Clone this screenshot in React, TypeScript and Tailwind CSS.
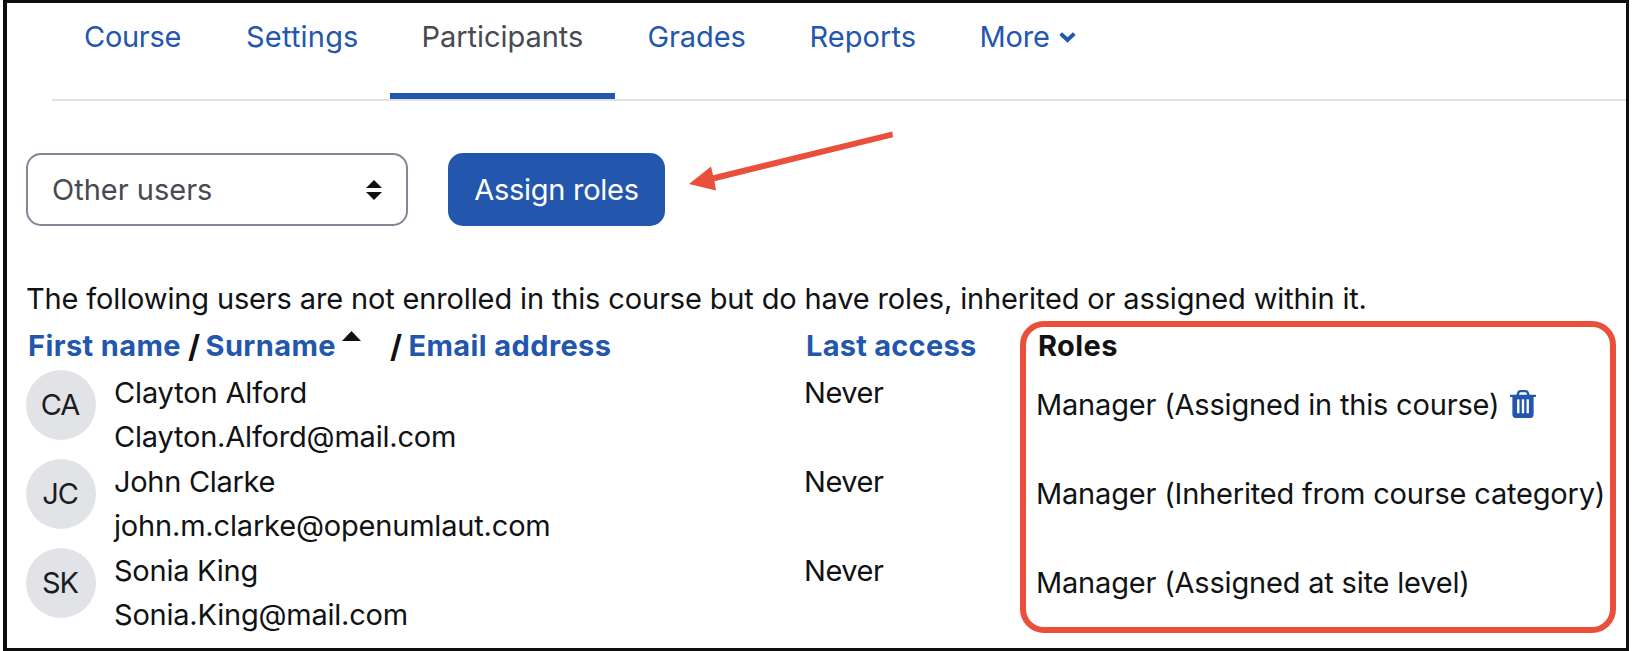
const users = [
  { initials: 'CA', name: 'Clayton Alford', nameClass: 'tracking-[-0.15px]', email: 'Clayton.Alford@mail.com', emailClass: 'tracking-[-0.2px]', role: 'Manager (Assigned in this course)', removable: true },
  { initials: 'JC', name: 'John Clarke', nameClass: 'tracking-[-0.3px]', email: 'john.m.clarke@openumlaut.com', emailClass: 'tracking-[-0.18px]', role: 'Manager (Inherited from course category)', removable: false },
  { initials: 'SK', name: 'Sonia King', nameClass: 'tracking-[-0.25px]', email: 'Sonia.King@mail.com', emailClass: 'tracking-[-0.22px]', role: 'Manager (Assigned at site level)', removable: false },
];

function ChevronDown() {
  return (
    <svg className="ml-[9px] mt-px h-[11px] w-[17px]" viewBox="0 0 17 11" fill="none" stroke="currentColor" strokeWidth="4">
      <path d="M1.700 1.600 L8.500 8 L15.300 1.600" />
    </svg>
  );
}

function TrashIcon() {
  return (
    <svg className="ml-[11px] -mt-[2px] h-[28px] w-[26px] text-[#2357ad]" viewBox="192 128 1408 1536" preserveAspectRatio="none" fill="currentColor">
      <path d="M704 1376v-704q0-14-9-23t-23-9h-64q-14 0-23 9t-9 23v704q0 14 9 23t23 9h64q14 0 23-9t9-23zm256 0v-704q0-14-9-23t-23-9h-64q-14 0-23 9t-9 23v704q0 14 9 23t23 9h64q14 0 23-9t9-23zm256 0v-704q0-14-9-23t-23-9h-64q-14 0-23 9t-9 23v704q0 14 9 23t23 9h64q14 0 23-9t9-23zm-544-992h448l-48-117q-7-9-17-11h-317q-10 2-17 11zm928 32v64q0 14-9 23t-23 9h-96v948q0 83-47 143.500t-113 60.500h-832q-66 0-113-58.500t-47-141.500v-952h-96q-14 0-23-9t-9-23v-64q0-14 9-23t23-9h309l70-167q15-37 54-63t79-26h320q40 0 79 26t54 63l70 167h309q14 0 23 9t9 23z" />
    </svg>
  );
}

function Slash({ className }: { className: string }) {
  return <span className={`inline-block text-[31px] leading-none text-[#0f1114] ${className}`}>/</span>;
}

export default function App() {
  return (
    <div className="h-[651px] w-[1633px] bg-white pl-[3px] pr-1 font-['Inter','Liberation_Sans',sans-serif] text-[29px] text-[#101214]">
      <div className="relative flex h-[651px] flex-col border-[3px] border-l-4 border-[#0d0e10] bg-white">
        <nav className="ml-[45px] flex h-[98px] shrink-0 border-b-2 border-[#dfe2e7] leading-[67px] text-[#2357ad]">
          <a className="w-[162px] pl-8 tracking-[-0.3px]">Course</a>
          <a className="w-[176px] pl-8 tracking-[0.2px]">Settings</a>
          <a className="mr-[1.5px] h-[96px] w-[225px] border-b-[6px] border-[#2357ad] pl-[31.5px] tracking-[-0.05px] text-[#474a50]">Participants</a>
          <a className="w-[162px] pl-[31px] tracking-[-0.1px]">Grades</a>
          <a className="w-[170px] pl-[31px] tracking-[0.05px]">Reports</a>
          <a className="flex h-[67px] items-center pl-[31px] tracking-[-0.15px]">
            More
            <ChevronDown />
          </a>
        </nav>

        <div className="ml-[19px] mt-[52px] flex h-[73px] shrink-0">
          <button className="flex w-[382px] items-center justify-between rounded-[15px] border-2 border-[#7f8694] pl-6 pr-6 text-[#474a50]">
            <span>Other users</span>
            <svg className="h-5 w-4" viewBox="0 0 16 20" fill="#0f1114">
              <path d="M0 8 L8 0 L16 8 Z M0 12 L16 12 L8 20 Z" />
            </svg>
          </button>
          <button className="ml-10 w-[217px] rounded-[15px] bg-[#2357ad] text-center tracking-[-0.27px] text-white">Assign roles</button>
        </div>

        <p className="ml-[19px] mt-[52px] h-[46px] shrink-0 whitespace-nowrap leading-[42px] tracking-[-0.145px]">
          The following users are not enrolled in this course but do have roles, inherited or assigned within it.
        </p>

        <div className="-mt-px ml-[21px] flex h-[46px] shrink-0 items-center font-bold tracking-[0.4px]">
          <div className="flex w-[778px] items-center whitespace-nowrap text-[#2357ad]">
            <span>First name</span>
            <Slash className="ml-[7px]" />
            <span className="ml-[5px]">Surname</span>
            <svg className="-mt-5 ml-[6px] h-[10px] w-[19px]" viewBox="0 0 19 10" fill="#0f1114">
              <path d="M0 10 L9.500 0 L19 10 Z" />
            </svg>
            <Slash className="ml-[29px]" />
            <span className="ml-[6px]">Email address</span>
          </div>
          <div className="w-[232px] tracking-[0.25px] text-[#2357ad]">Last access</div>
          <div>Roles</div>
        </div>

        <div className="ml-[19px] mt-px">
          {users.map((user) => (
            <div key={user.initials} className="flex h-[89px] items-start">
              <div className="flex h-[70px] w-[70px] items-center justify-center rounded-full bg-[#e1e3e7] pr-[2px] tracking-[-1px] text-[#1b1d20]">{user.initials}</div>
              <div className="ml-[18px] mt-px w-[690px] leading-[44px]">
                <div className={user.nameClass}>{user.name}</div>
                <div className={user.emailClass}>{user.email}</div>
              </div>
              <div className="mt-px w-[232px] leading-[44px] tracking-[-0.45px]">Never</div>
              <div className="flex h-[70px] items-center whitespace-nowrap tracking-[-0.19px]">
                {user.role}
                {user.removable && <TrashIcon />}
              </div>
            </div>
          ))}
        </div>

        <svg className="absolute left-[678px] top-[125px] h-[70px] w-[220px]" viewBox="685 128 220 70" fill="#e94f3b">
          <path d="M892.300 131.600 L893 137.200 L714.500 181.200 L716 190.500 L689 184 L711 166.500 L713 175.200 Z" />
        </svg>
        <div className="absolute left-[1013px] top-[318px] h-[312px] w-[596px] rounded-[24px] border-[6px] border-[#e94f3b]" />
      </div>
    </div>
  );
}
